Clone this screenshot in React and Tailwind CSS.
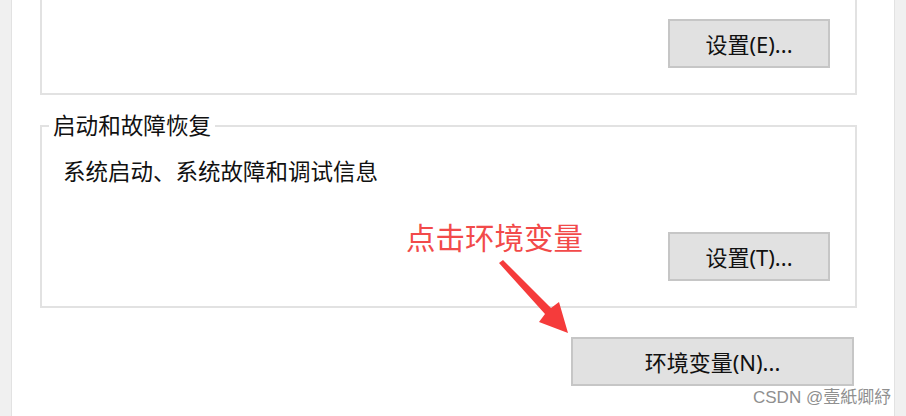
export default function App() {
  const font = "font-['Noto_Sans','Noto_Sans_CJK_SC',sans-serif]";
  const btn =
    "flex items-center justify-center bg-[#e1e1e1] border-2 border-[#c6c6c6] text-[22px] leading-none text-[#111]";
  return (
    <div className={`relative flex w-[906px] h-[416px] bg-white overflow-hidden ${font}`}>
      <div className="w-[12px] shrink-0 bg-[#f0f0f0] border-r border-[#e2e2e2]" />
      <div className="flex-1 flex flex-col">
        {/* top group box (cut off) */}
        <div className="ml-[28px] w-[817px] h-[95px] border-2 border-t-0 border-[#e2e2e2] flex justify-end pr-[25px] pt-[19px]">
          <button className={`${btn} w-[162px] h-[49px]`}>设置(E)...</button>
        </div>
        {/* startup and recovery */}
        <div className="relative ml-[28px] mt-[30px] w-[817px] h-[183px] border-2 border-[#e2e2e2] flex flex-col pl-[21px] pr-[25px] pt-[30px]">
          <div className="absolute left-[7px] top-[-14px] bg-white px-[4px] text-[22.6px] leading-[26px] text-[#111]">
            启动和故障恢复
          </div>
          <div className="text-[22.5px] leading-[30px] text-[#111]">系统启动、系统故障和调试信息</div>
          <div className="flex justify-end mt-[45px]">
            <button className={`${btn} w-[162px] h-[49px]`}>设置(T)...</button>
          </div>
        </div>
        <div className="flex justify-end mr-[40px] mt-[29px]">
          <button className={`${btn} w-[283px] h-[49px]`}>环境变量(N)...</button>
        </div>
      </div>
      <div className="w-[12px] shrink-0 bg-[#f0f0f0] border-l border-[#e2e2e2]" />

      {/* annotation */}
      <div className="absolute left-[406px] top-[223px] text-[29.5px] leading-none text-[#f24a4a]">
        点击环境变量
      </div>
      <svg className="absolute left-0 top-0 pointer-events-none" width="906" height="416">
        <polygon
          points="499,263 503,260 551,308 559,302 568,333 539,322 545,314"
          fill="#f53b3b"
        />
      </svg>
      <div className="absolute left-[753px] top-[386px] text-[17px] leading-[24px] text-[#8f8f8f] font-['Liberation_Sans','Noto_Sans_CJK_TC',sans-serif]">
        CSDN @壹紙卿紓
      </div>
    </div>
  );
}
